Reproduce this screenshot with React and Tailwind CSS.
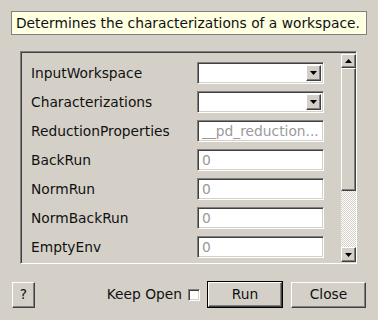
import React from 'react';

const raised =
  'border border-t-white border-l-white border-r-[#404040] border-b-[#404040] shadow-[inset_-1px_-1px_0_#808080] bg-[#d4d0c8]';
const sunken =
  'border border-t-[#808080] border-l-[#808080] border-r-white border-b-white shadow-[inset_1px_1px_0_#404040,inset_-1px_-1px_0_#d4d0c8]';

const DownArrow = () => (
  <svg width="7" height="4" viewBox="0 0 7 4">
    <path d="M0 0h7L3.5 4z" fill="#000" />
  </svg>
);

const UpArrow = () => (
  <svg width="7" height="4" viewBox="0 0 7 4">
    <path d="M0 4h7L3.5 0z" fill="#000" />
  </svg>
);

const rows = [
  { label: 'InputWorkspace', kind: 'combo' },
  { label: 'Characterizations', kind: 'combo' },
  { label: 'ReductionProperties', kind: 'text', value: '__pd_reduction...' },
  { label: 'BackRun', kind: 'text', value: '0' },
  { label: 'NormRun', kind: 'text', value: '0' },
  { label: 'NormBackRun', kind: 'text', value: '0' },
  { label: 'EmptyEnv', kind: 'text', value: '0' },
];

const Field = ({ row }) => {
  if (row.kind === 'combo') {
    return (
      <div className={`w-[127px] h-[22px] bg-white flex items-stretch justify-end p-[2px] ${sunken}`}>
        <div className={`w-[15px] flex items-center justify-center ${raised}`}>
          <DownArrow />
        </div>
      </div>
    );
  }
  return (
    <div className={`w-[127px] h-[22px] bg-white flex items-center pl-[4px] text-[#9a9a9a] ${sunken}`}>
      {row.value}
    </div>
  );
};

export default function App() {
  return (
    <div
      className="w-[378px] h-[320px] bg-[#d4d0c8] text-[#111] text-[13.8px] overflow-hidden flex flex-col"
      style={{ fontFamily: '"DejaVu Sans", sans-serif' }}
    >
      {/* tooltip */}
      <div className="mt-[11px] ml-[11px] w-[356px] h-[24px] bg-[#ffffe1] border border-[#808080] flex items-center pl-[4px] whitespace-nowrap">
        Determines the characterizations of a workspace.
      </div>

      {/* properties frame */}
      <div className="mt-[16px] ml-[20px] w-[337px] h-[213px] flex border border-t-[#808080] border-l-[#808080] border-r-white border-b-white shadow-[inset_1px_1px_0_#404040]">
        <div className="flex-1 pt-[10px] pl-[10px] flex flex-col gap-[7px]">
          {rows.map((row) => (
            <div key={row.label} className="flex items-center h-[22px]">
              <div className="w-[166px] whitespace-nowrap">{row.label}</div>
              <Field row={row} />
            </div>
          ))}
        </div>
        <div className="w-[15px] mt-[2px] mb-[1px] flex flex-col">
          <div className={`h-[14px] flex items-center justify-center ${raised}`}>
            <UpArrow />
          </div>
          <div className={`h-[123px] ${raised}`} />
          <div className="flex-1 bg-[repeating-conic-gradient(#ffffff_0_25%,#d4d0c8_0_50%)] bg-[length:2px_2px]" />
          <div className={`h-[15px] flex items-center justify-center ${raised}`}>
            <DownArrow />
          </div>
        </div>
      </div>

      {/* bottom buttons */}
      <div className="mt-[17px] pl-[12px] pr-[12px] flex items-center">
        <div className={`w-[23px] h-[26px] flex items-center justify-center ${raised}`}>?</div>
        <div className="flex-1" />
        <span className="whitespace-nowrap">Keep Open</span>
        <div className={`ml-[6px] w-[12px] h-[12px] bg-white ${sunken}`} />
        <div className="ml-[7px] w-[76px] h-[27px] border border-black flex">
          <div className={`flex-1 flex items-center justify-center ${raised}`}>Run</div>
        </div>
        <div className={`ml-[8px] w-[75px] h-[26px] flex items-center justify-center ${raised}`}>Close</div>
      </div>
    </div>
  );
}
